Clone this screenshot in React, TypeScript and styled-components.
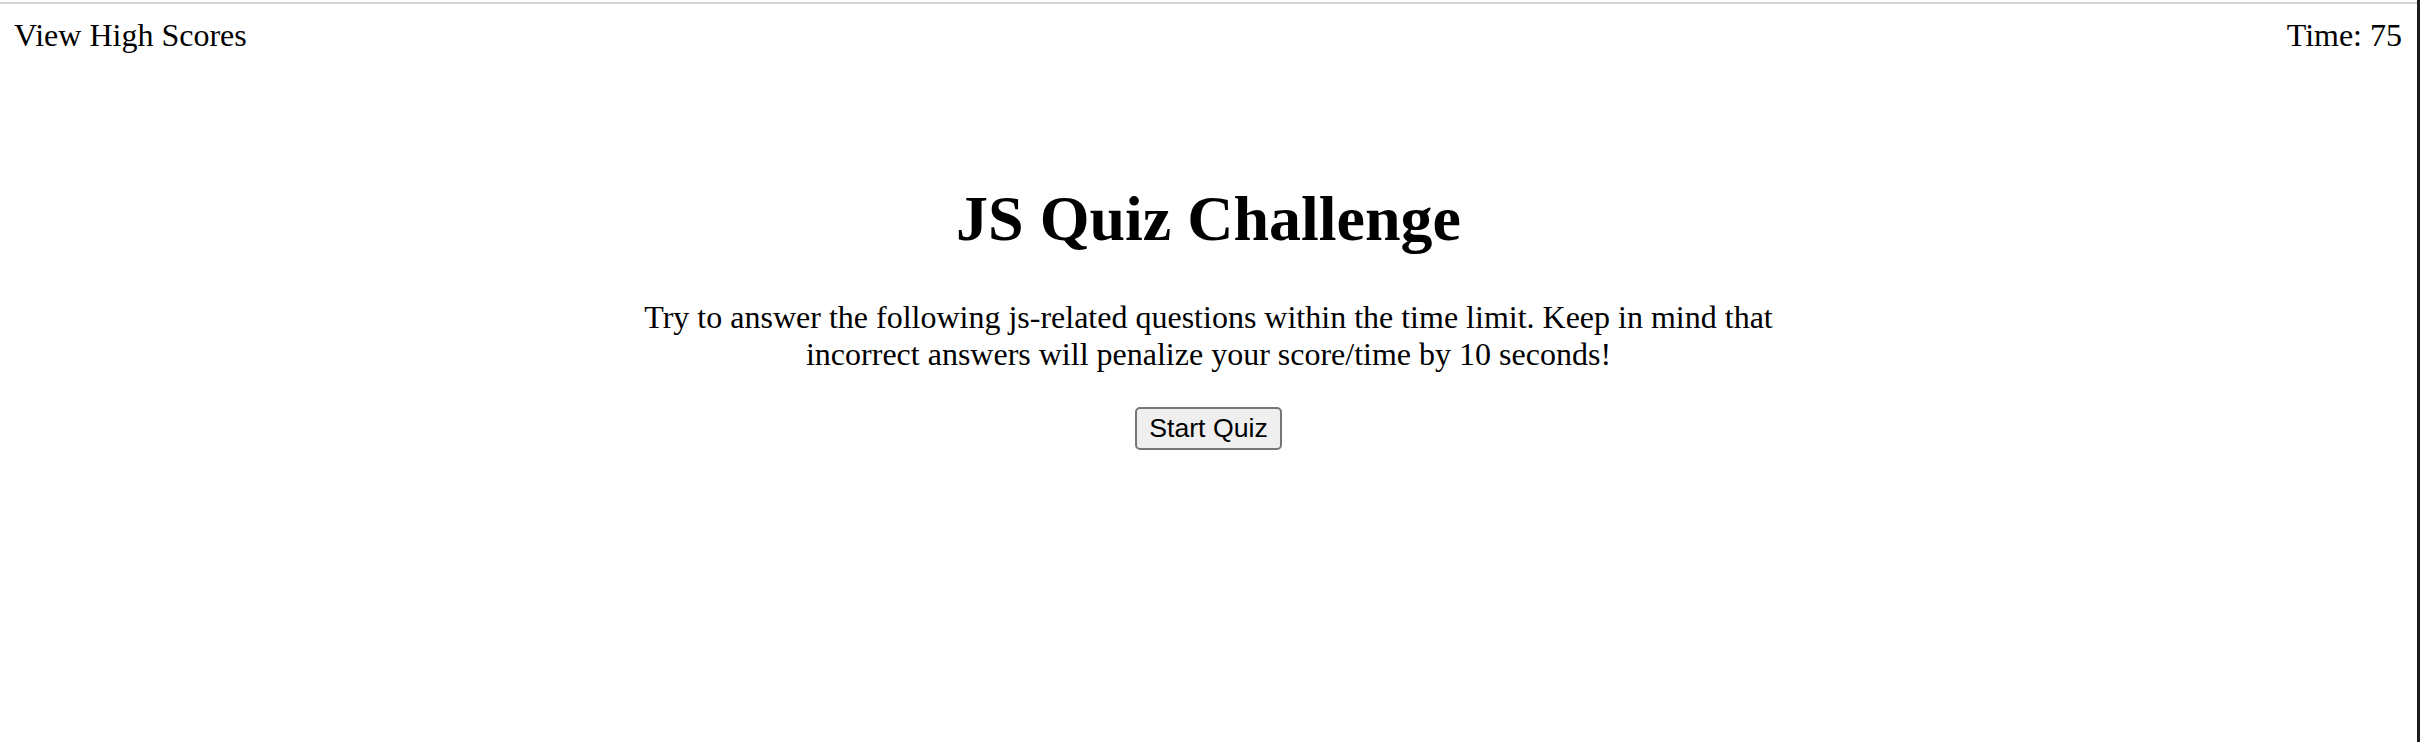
import React from "react";
import styled, { createGlobalStyle } from "styled-components";

const Global = createGlobalStyle`
  html, body {
    margin: 0;
    padding: 0;
    background: #ffffff;
  }
  body {
    font-family: "Liberation Serif", "Times New Roman", serif;
    color: #000000;
  }
`;

const Page = styled.div`
  box-sizing: border-box;
  min-height: 742px;
  padding-top: 2px;
  border-right: 3px solid #1c1c1c;
`;

const TopRule = styled.div`
  height: 2px;
  background: #d4d4d4;
`;

const Header = styled.header`
  display: flex;
  justify-content: space-between;
  align-items: baseline;
  padding: 13px 15px 0 14px;
  font-size: 32px;
`;

const HeaderItem = styled.span`
  line-height: normal;
`;

const Main = styled.main`
  display: flex;
  flex-direction: column;
  align-items: center;
  text-align: center;
  padding: 0 16px;
`;

const Title = styled.h1`
  margin: 128px 0 0;
  font-size: 64px;
  font-weight: bold;
  line-height: normal;
`;

const Intro = styled.p`
  margin: 43px 0 0;
  max-width: 1190px;
  font-size: 32px;
  line-height: normal;
`;

const StartButton = styled.button`
  margin-top: 34px;
  font-family: "Liberation Sans", Arial, sans-serif;
  font-size: 26.67px;
  line-height: normal;
  padding: 4px 12px;
  color: #000000;
  background: #efefef;
  border: 2px solid #767676;
  border-radius: 5px;
  cursor: pointer;
`;

export default function App() {
  return (
    <>
      <Global />
      <Page>
        <TopRule />
        <Header>
          <HeaderItem>View High Scores</HeaderItem>
          <HeaderItem>Time: 75</HeaderItem>
        </Header>
        <Main>
          <Title>JS Quiz Challenge</Title>
          <Intro>
            Try to answer the following js-related questions within the time
            limit. Keep in mind that incorrect answers will penalize your
            score/time by 10 seconds!
          </Intro>
          <StartButton type="button">Start Quiz</StartButton>
        </Main>
      </Page>
    </>
  );
}
